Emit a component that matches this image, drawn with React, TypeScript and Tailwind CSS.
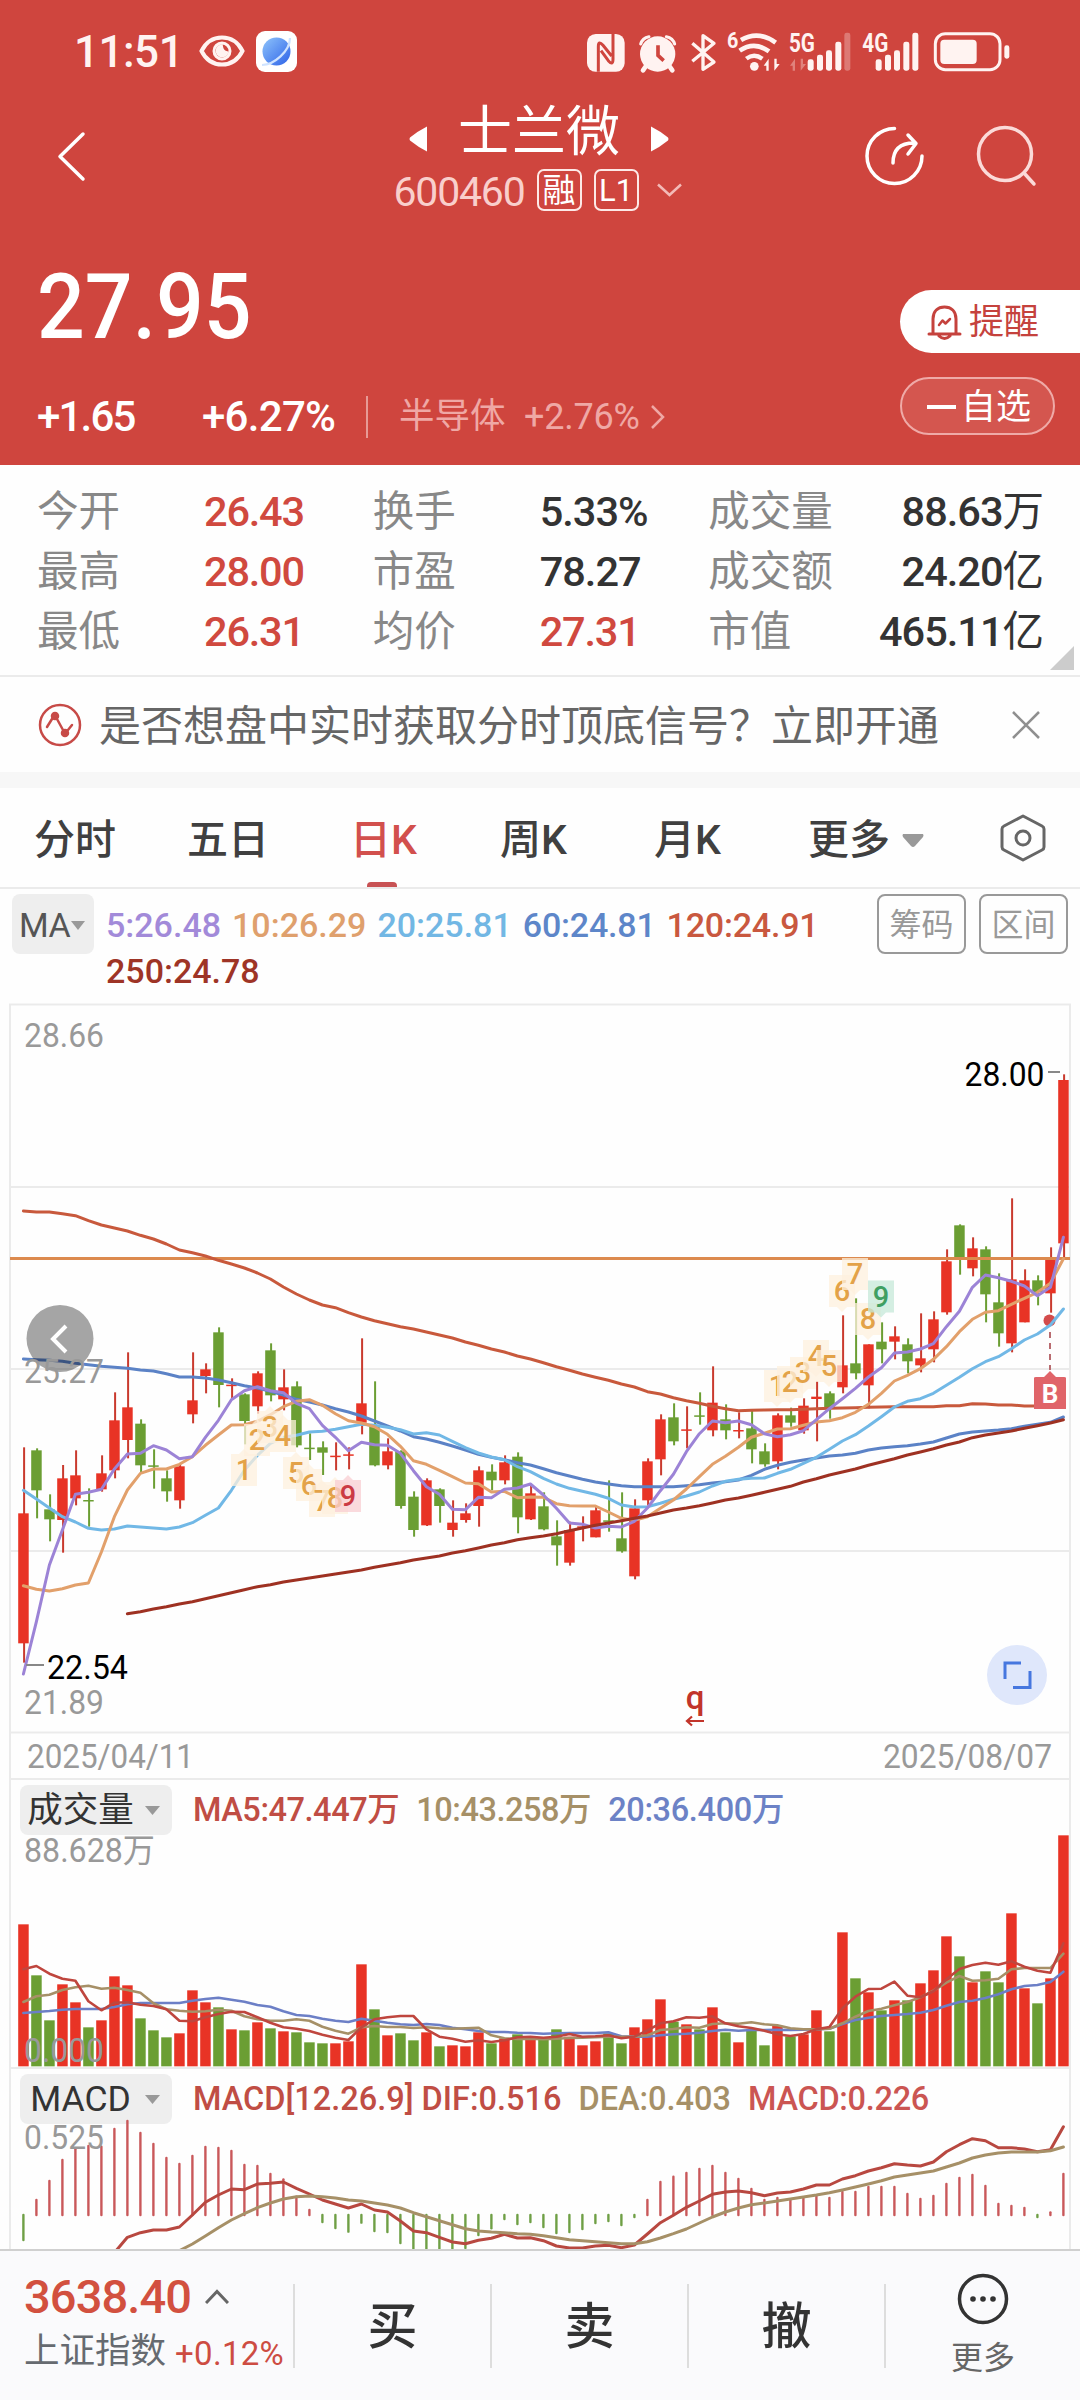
import type { ReactNode } from "react";

type Candle = [high: number, top: number, bottom: number, low: number];
type Line = { color: string; start?: number; points: number[] };

const RED = "#e83325";
const GREEN = "#6b9e33";

// 81 trading days, g = close below open
const DAYS = "rggrrgrrrgggrrrgrgrgrggg" + "rrrgrggrgrrrgrgrggrrrggr" + "rrgrgrgrggrgrrgrgrgrgrrr" + "grggrrgrr";

const CANDLES: Candle[] = [
  [442, 640, 1030, 1088], [445, 451, 571, 655], [583, 628, 658, 724], [495, 535, 660, 758], [451, 526, 595, 616],
  [565, 600, 603, 680], [466, 520, 568, 575], [277, 361, 511, 535], [157, 322, 420, 475], [358, 371, 496, 516],
  [448, 496, 499, 566], [511, 535, 574, 605], [490, 499, 601, 626], [157, 301, 343, 370], [190, 208, 228, 280],
  [82, 97, 255, 322], [235, 254, 257, 295], [280, 283, 363, 433], [214, 220, 319, 341], [130, 151, 286, 304],
  [208, 262, 298, 331], [244, 259, 436, 442], [400, 443, 447, 480], [424, 442, 458, 525], [427, 467, 471, 511],
  [442, 463, 467, 508], [115, 310, 368, 403], [244, 376, 496, 499], [415, 454, 496, 508], [451, 454, 618, 626],
  [574, 590, 690, 710], [535, 541, 676, 678], [565, 568, 618, 668], [601, 668, 690, 710], [610, 640, 660, 668],
  [499, 511, 618, 680], [493, 515, 541, 571], [466, 487, 541, 553], [457, 470, 652, 700], [556, 580, 658, 660],
  [577, 619, 688, 691], [661, 709, 736, 797], [665, 690, 788, 797], [649, 679, 683, 724], [620, 631, 712, 712],
  [541, 661, 665, 695], [577, 715, 754, 758], [598, 625, 829, 838], [475, 484, 601, 616], [343, 358, 478, 526],
  [310, 352, 424, 436], [319, 388, 391, 445], [277, 346, 349, 374], [199, 308, 391, 409], [313, 358, 391, 418],
  [337, 390, 394, 415], [332, 385, 448, 490], [430, 454, 493, 500], [340, 346, 484, 508], [323, 346, 368, 380],
  [295, 317, 391, 401], [244, 290, 297, 424], [274, 280, 322, 356], [46, 196, 262, 280], [-5, 190, 220, 238],
  [133, 133, 256, 325], [67, 125, 148, 190], [79, 109, 125, 178], [115, 133, 184, 220], [40, 175, 196, 217],
  [34, 58, 148, 187], [-152, -116, 37, 44], [-227, -224, -128, -76], [-188, -155, -95, -71], [-161, -152, -17, 67],
  [-80, 7, 100, 140], [-305, -62, 130, 157], [-92, -59, 67, 67], [-74, -59, -24, 16], [-158, -122, -20, 38],
  [-677, -660, -170, -128],
];

const PRICE_LINES: Line[] = [
  {
    color: "#c8593c",
    points: [
      -267, -264, -264, -259, -253, -238, -225, -216, -207, -194, -183, -168, -150, -142, -132, -119, -108, -96, -81, -63,
      -39, -18, 0, 15, 23, 38, 51, 62, 71, 80, 87, 96, 105, 114, 126, 136, 147, 156, 168, 177,
      188, 200, 211, 222, 232, 241, 252, 261, 275, 282, 293, 302, 310, 319, 326, 332, 331, 330, 329, 329,
      328, 326, 325, 324, 323, 322, 321, 320, 320, 320, 320, 317, 317, 311, 312, 315, 315, 318, 318, 318, 318,
    ],
  },
  {
    color: "#5b82c6",
    points: [
      177, 179, 181, 184, 190, 194, 199, 202, 205, 210, 213, 221, 231, 231, 234, 240, 248, 257, 264, 274,
      285, 298, 306, 315, 326, 336, 348, 363, 378, 393, 410, 417, 427, 438, 450, 463, 472, 479, 488, 495,
      506, 518, 528, 538, 546, 552, 557, 560, 560, 560, 560, 557, 554, 549, 545, 540, 526, 508, 496, 487,
      480, 474, 468, 465, 460, 450, 444, 440, 437, 432, 426, 414, 402, 396, 393, 390, 386, 379, 373, 367, 351,
    ],
  },
  {
    color: "#71b8e6",
    points: [
      571, 597, 624, 650, 666, 685, 690, 687, 678, 681, 684, 687, 681, 668, 646, 624, 571, 511, 466, 430,
      412, 406, 396, 394, 388, 380, 373, 376, 382, 389, 402, 398, 405, 424, 443, 459, 471, 479, 500, 515,
      535, 552, 565, 574, 583, 595, 615, 621, 620, 610, 598, 588, 576, 558, 544, 538, 535, 534, 520, 508,
      490, 472, 448, 423, 404, 378, 350, 321, 304, 296, 280, 256, 232, 206, 185, 170, 146, 120, 102, 75, 27,
    ],
  },
  {
    color: "#e2a06b",
    points: [
      857, 868, 873, 866, 855, 849, 756, 650, 570, 520, 507, 507, 493, 470, 436, 405, 375, 374, 364, 344,
      320, 304, 299, 316, 341, 362, 369, 380, 403, 439, 482, 493, 511, 530, 549, 551, 576, 574, 593, 591,
      592, 611, 617, 618, 618, 636, 655, 661, 650, 625, 600, 567, 530, 493, 469, 442, 412, 400, 387, 386,
      376, 366, 362, 353, 337, 313, 280, 243, 226, 206, 178, 140, 95, 58, 37, 32, 13, -5, -23, -50, -124,
    ],
  },
  {
    color: "#9c83d6",
    points: [
      1122, 965, 795, 690, 583, 577, 568, 507, 462, 460, 437, 450, 476, 470, 412, 361, 299, 272, 260, 272,
      278, 310, 326, 376, 412, 452, 427, 434, 436, 460, 512, 560, 583, 628, 629, 592, 593, 568, 564, 552,
      585, 625, 669, 673, 684, 679, 681, 664, 624, 572, 523, 455, 401, 363, 368, 363, 374, 401, 410, 404,
      392, 359, 326, 296, 265, 231, 203, 159, 156, 147, 131, 80, 34, -38, -75, -67, -56, -42, -13, -38, -188,
    ],
  },
  {
    color: "#9e3122",
    start: 8,
    points: [
      941, 935, 927, 920, 912, 905, 896, 887, 878, 869, 860, 854, 846, 840, 834, 828, 822, 816, 810, 802,
      795, 788, 780, 774, 768, 759, 752, 744, 735, 728, 719, 713, 708, 701, 692, 684, 676, 669, 662, 655,
      648, 639, 630, 624, 617, 609, 600, 594, 586, 577, 568, 559, 546, 536, 525, 516, 507, 496, 486, 476,
      465, 456, 446, 435, 426, 413, 405, 399, 393, 385, 377, 369, 359,
    ],
  },
];

const VOLUMES = [
  463, 616, 751, 643, 697, 772, 751, 619, 646, 745, 781, 802, 790, 661, 697, 712, 778, 781, 757, 775,
  784, 787, 817, 820, 820, 814, 583, 718, 796, 790, 811, 787, 829, 826, 829, 787, 820, 805, 793, 808,
  808, 778, 800, 826, 814, 790, 820, 772, 748, 688, 755, 763, 778, 712, 787, 817, 781, 826, 768, 799,
  793, 721, 784, 487, 625, 667, 721, 691, 691, 640, 601, 499, 559, 637, 604, 637, 430, 655, 700, 625, 196,
];

const VOLUME_LINES: Line[] = [
  {
    color: "#6c7fc6",
    points: [
      729, 726, 723, 719, 717, 717, 717, 711, 703, 699, 699, 699, 699, 692, 687, 683, 689, 695, 705, 710,
      724, 735, 738, 746, 752, 756, 746, 752, 758, 763, 765, 762, 765, 773, 778, 783, 786, 786, 788, 789,
      791, 790, 789, 789, 789, 787, 799, 800, 800, 796, 793, 791, 788, 783, 779, 782, 780, 780, 779, 780,
      779, 778, 776, 762, 750, 743, 738, 735, 732, 728, 720, 707, 696, 692, 684, 673, 658, 648, 645, 636, 605,
    ],
  },
  {
    color: "#a69067",
    points: [
      696, 679, 674, 660, 652, 647, 656, 653, 660, 668, 700, 718, 722, 725, 724, 719, 722, 739, 748, 752,
      752, 748, 752, 770, 782, 791, 772, 768, 771, 771, 774, 772, 775, 776, 775, 773, 796, 805, 807, 806,
      808, 806, 804, 803, 802, 800, 800, 800, 796, 780, 777, 772, 773, 762, 760, 761, 757, 763, 766, 775,
      778, 778, 776, 760, 740, 723, 716, 706, 696, 682, 662, 638, 618, 632, 631, 626, 598, 594, 594, 594, 551,
    ],
  },
  {
    color: "#bf463e",
    points: [
      598, 588, 611, 626, 632, 694, 721, 698, 697, 704, 708, 718, 752, 754, 742, 732, 725, 726, 742, 758,
      772, 776, 783, 794, 803, 810, 772, 748, 742, 738, 738, 778, 800, 806, 815, 811, 816, 811, 802, 800,
      803, 800, 792, 800, 799, 796, 805, 800, 781, 760, 754, 742, 743, 739, 760, 769, 774, 782, 793, 798,
      792, 778, 771, 715, 680, 657, 656, 635, 677, 682, 664, 628, 597, 585, 578, 584, 574, 590, 602, 608, 520,
    ],
  },
];

const MACD_BASE = 1335;
const MACD_BARS = [
  1410, 1290, 1233, 1170, 1138, 1128, 1130, 1077, 1053, 1089, 1122, 1164, 1182, 1158, 1131, 1134, 1143, 1185, 1188, 1212,
  1228, 1280, 1320, 1356, 1374, 1385, 1358, 1383, 1386, 1419, 1442, 1442, 1442, 1442, 1434, 1395, 1375, 1347, 1362, 1356,
  1371, 1389, 1386, 1377, 1359, 1353, 1365, 1341, 1290, 1236, 1220, 1209, 1197, 1188, 1209, 1227, 1257, 1290, 1284, 1290,
  1284, 1278, 1284, 1266, 1266, 1251, 1251, 1251, 1272, 1287, 1278, 1242, 1224, 1215, 1248, 1302, 1308, 1314, 1341, 1327, 1212,
];

const MACD_LINES: Line[] = [
  {
    color: "#b84840",
    start: 7,
    points: [
      1448, 1402, 1388, 1380, 1380, 1371, 1335, 1297, 1275, 1257, 1259, 1242, 1240, 1236,
      1255, 1272, 1290, 1302, 1314, 1302, 1320, 1326, 1353, 1383, 1388, 1402, 1416, 1421, 1411, 1405, 1393, 1404, 1403, 1412,
      1428, 1434, 1434, 1428, 1426, 1433, 1425, 1392, 1358, 1336, 1312, 1293, 1273, 1266, 1263, 1268, 1277, 1269, 1266, 1257,
      1245, 1245, 1227, 1217, 1203, 1193, 1181, 1185, 1188, 1176, 1145, 1124, 1106, 1112, 1133, 1133, 1137, 1145, 1139, 1070,
    ],
  },
  {
    color: "#a69067",
    start: 12,
    points: [
      1442, 1422, 1398, 1373, 1350, 1331, 1313, 1299, 1287, 1280, 1278, 1280, 1284, 1290, 1293, 1299, 1305, 1314, 1328,
      1340, 1352, 1364, 1376, 1383, 1386, 1388, 1391, 1393, 1397, 1403, 1409, 1412, 1415, 1418, 1421, 1421, 1415, 1404, 1391,
      1377, 1359, 1341, 1326, 1314, 1304, 1299, 1293, 1287, 1281, 1275, 1268, 1260, 1251, 1242, 1232, 1221, 1215, 1209, 1203,
      1191, 1179, 1164, 1155, 1149, 1146, 1146, 1146, 1142, 1131,
    ],
  },
];

const STATS = [
  [["今开", "26.43", 1], ["换手", "5.33%", 0], ["成交量", "88.63万", 0]],
  [["最高", "28.00", 1], ["市盈", "78.27", 0], ["成交额", "24.20亿", 0]],
  [["最低", "26.31", 1], ["均价", "27.31", 1], ["市值", "465.11亿", 0]],
] as const;

const px = (i: number) => 23.4 + i * 13;
const priceY = (v: number) => 1300 + v / 3;
const subY = (v: number) => 1770 + v / 3;
const dayColor = (i: number) => (DAYS[i] === "g" ? GREEN : RED);

function Lines({ lines, y, width = 3 }: { lines: Line[]; y: (v: number) => number; width?: number }) {
  return (
    <>
      {lines.map((line, n) => (
        <polyline
          key={n}
          fill="none"
          stroke={line.color}
          strokeWidth={width}
          strokeLinejoin="round"
          strokeLinecap="round"
          points={line.points.map((v, i) => `${px(i + (line.start ?? 0))},${y(v).toFixed(1)}`).join(" ")}
        />
      ))}
    </>
  );
}

type LabelProps = { x: number; y: number; w: number; fill: string; children: string };

function Label({ x, y, w, fill, children }: LabelProps) {
  return (
    <text x={x} y={y} fill={fill} fontSize="32.500" textLength={w} lengthAdjust="spacingAndGlyphs">
      {children}
    </text>
  );
}

function StatusBar() {
  return (
    <div className="flex h-[102px] items-center pl-[74px] text-[#fff3f1]">
      <span className="w-[125px] pt-px text-[44px] font-medium tracking-[-0.5px]">11:51</span>
      <svg width="46" height="32" viewBox="0 0 46 32" fill="none" stroke="currentColor" strokeWidth="4">
        <path d="M2.500 16C7 7 14 2.500 23 2.500S39 7 43.500 16C39 25 32 29.500 23 29.500S7 25 2.500 16Z" />
        <circle cx="23" cy="16" r="8" strokeWidth="3" />
        <path d="M22 11.500A4.500 4.500 0 1 0 27 18Q23 17 22 11.500Z" fill="currentColor" />
      </svg>
      <div className="ml-[11px] flex h-[41px] w-[41px] items-center justify-center rounded-[9px] bg-white">
        <svg width="35" height="35" viewBox="0 0 35 35">
          <defs>
            <linearGradient id="globe" x1="0" y1="0" x2="1" y2="1">
              <stop offset="0" stopColor="#8fc4fb" />
              <stop offset="1" stopColor="#2d62e8" />
            </linearGradient>
          </defs>
          <circle cx="17.500" cy="17.500" r="14" fill="url(#globe)" />
          <path d="M3 31C15 31 31 17 31 4" fill="none" stroke="#cfe3ff" strokeWidth="2.200" />
        </svg>
      </div>
      <svg className="ml-[290px] overflow-visible" width="430" height="42" viewBox="50 38 1290 126" fill="none">
        <rect x="50" y="50" width="113" height="113" rx="26" fill="currentColor" />
        <path d="M84 163V88Q84 68 98 84L124 116M128 50V126Q128 146 114 130L92 100" stroke="#cf453e" strokeWidth="9" />
        <circle cx="262" cy="110" r="53" fill="currentColor" />
        <path d="M211 80Q216 62 236 58M313 80Q308 62 288 58" stroke="currentColor" strokeWidth="9" strokeLinecap="round" />
        <path d="M227 146l-9 13M297 146l9 13" stroke="currentColor" strokeWidth="14" strokeLinecap="round" />
        <path d="M263 84v30l17 16" stroke="#cf453e" strokeWidth="11" />
        <path d="M366 78L431 134L398 156V55L431 78L366 132" stroke="currentColor" strokeWidth="10" strokeLinejoin="round" />
        <path d="M512 68Q564 38 616 76" stroke="currentColor" strokeWidth="14" />
        <path d="M508 100Q552 70 596 102" stroke="currentColor" strokeWidth="14" />
        <path d="M528 124Q551 106 576 124" stroke="currentColor" strokeWidth="13" />
        <circle cx="552" cy="147" r="13" fill="currentColor" />
        <path d="M580 145L595 124V160H588V145ZM628 140L612 160V124H619V140Z" fill="currentColor" />
        <path d="M659 145L674 124V160H667V145ZM707 140L691 160V124H698V140Z" fill="currentColor" opacity=".35" />
        <g fill="currentColor">
          <rect x="712" y="126" width="18" height="34" rx="7" />
          <rect x="740" y="112" width="18" height="48" rx="7" />
          <rect x="767" y="99" width="18" height="61" rx="7" />
          <rect x="795" y="73" width="18" height="87" rx="7" />
          <rect x="822" y="46" width="18" height="114" rx="7" opacity=".3" />
          <rect x="916" y="126" width="18" height="34" rx="7" />
          <rect x="944" y="112" width="18" height="48" rx="7" />
          <rect x="971" y="99" width="18" height="61" rx="7" />
          <rect x="999" y="73" width="18" height="87" rx="7" />
          <rect x="1026" y="46" width="18" height="114" rx="7" />
        </g>
        <g fill="currentColor" fontWeight="700">
          <text x="470" y="92" fontSize="66" textLength="34" lengthAdjust="spacingAndGlyphs">6</text>
          <text x="656" y="103" fontSize="76" textLength="78" lengthAdjust="spacingAndGlyphs">5G</text>
          <text x="876" y="103" fontSize="76" textLength="78" lengthAdjust="spacingAndGlyphs">4G</text>
        </g>
        <rect x="1095" y="49" width="194" height="108" rx="30" stroke="currentColor" strokeWidth="9" />
        <rect x="1110" y="67" width="109" height="73" rx="12" fill="currentColor" />
        <rect x="1302" y="84" width="15" height="40" rx="7" fill="currentColor" />
      </svg>
    </div>
  );
}

function TitleBar() {
  return (
    <div className="flex h-[128px] pl-[56px] pr-[42px] text-white">
      <svg className="mt-[28px]" width="32" height="52" viewBox="0 0 32 52" fill="none" stroke="currentColor" strokeWidth="3.500" strokeLinecap="round" strokeLinejoin="round">
        <path d="M27 4L4 26.500L27 49" />
      </svg>
      <div className="ml-[290px] flex w-[322px] flex-col items-center">
        <div className="flex h-[60px] items-center gap-[29px] pt-[2px]">
          <svg className="mt-[12px]" width="20" height="28" viewBox="0 0 20 28" fill="currentColor">
            <path d="M18 1.500V26.500Q9 22 1 15.500Q0 14 1 12.500Q9 6 18 1.500Z" />
          </svg>
          <h1 className="text-[54px] leading-[58px]">士兰微</h1>
          <svg className="mt-[12px]" width="20" height="28" viewBox="0 0 20 28" fill="currentColor">
            <path d="M2 1.500V26.500Q11 22 19 15.500Q20 14 19 12.500Q11 6 2 1.500Z" />
          </svg>
        </div>
        <div className="mt-[5px] flex items-center gap-[12px] pr-[3px]">
          <span className="pt-[4px] text-[41px] leading-[42px] tracking-[-1.200px] text-[#f9cfcc]">600460</span>
          <span className="flex h-[42px] w-[45px] items-center justify-center rounded-[7px] border-2 border-[#fde9e7] text-[33px]">融</span>
          <span className="flex h-[42px] w-[45px] items-center justify-center rounded-[7px] border-2 border-[#fde9e7] text-[31px]">L1</span>
          <svg className="ml-[6px]" width="25" height="14" viewBox="0 0 25 14" fill="none" stroke="#f3bab7" strokeWidth="2.500">
            <path d="M1 1.500L12.500 12L24 1.500" />
          </svg>
        </div>
      </div>
      <div className="ml-auto mt-[23px] flex gap-[51px]">
        <svg width="60" height="62" viewBox="0 0 60 62" fill="none" stroke="currentColor" strokeWidth="3.500" strokeLinecap="round" strokeLinejoin="round">
          <path d="M29.500 3.500A27.500 27.500 0 1 0 57 31" />
          <path d="M28 38Q28 18 49 18M43 10L51 18.500L43 29" />
        </svg>
        <svg width="62" height="62" viewBox="0 0 62 62" fill="none" stroke="#fbdad8" strokeWidth="3.500" strokeLinecap="round">
          <circle cx="29" cy="29" r="26.500" />
          <path d="M48 48L58 59" />
        </svg>
      </div>
    </div>
  );
}

function Quote() {
  return (
    <div className="flex h-[235px] justify-between pl-[37px] text-white">
      <div>
        <div className="mt-[28px] h-[100px] origin-left scale-x-[0.935] text-[90px] font-medium leading-[100px]">27.95</div>
        <div className="mt-[37px] flex h-[44px] items-center text-[42px] font-medium tracking-[-1px]">
          <span className="w-[165px] tracking-[-1.800px]">+1.65</span>
          <span className="w-[164px] tracking-[-0.700px]">+6.27%</span>
          <span className="h-[42px] w-[33px] border-l-2 border-[#e79a96]" />
          <span className="w-[125px] text-[35.500px] font-normal tracking-normal text-[#efa8a5]">半导体</span>
          <span className="w-[126px] text-[36px] font-normal tracking-[-0.200px] text-[#efa8a5]">+2.76%</span>
          <svg width="16" height="26" viewBox="0 0 16 26" fill="none" stroke="#efa8a5" strokeWidth="2.500">
            <path d="M2 2L13 13L2 24" />
          </svg>
        </div>
      </div>
      <div className="flex w-[180px] flex-col items-start pt-[60px]">
        <div className="flex h-[63px] w-full items-center rounded-l-full bg-white pl-[27px] pt-[2px] text-[35px] text-[#c5423d]">
          <svg className="mr-[7px]" width="35" height="36" viewBox="0 0 35 36" fill="none" stroke="currentColor" strokeWidth="3" strokeLinejoin="round" strokeLinecap="round">
            <path d="M6 28V14C6 6 11 2 17.500 2S29 6 29 14V28" />
            <path d="M2 29H33M12 31Q17.500 36 23 31" />
            <path d="M12 20L15.500 15.500L18.500 18.500L23 14" strokeWidth="2.500" />
          </svg>
          提醒
        </div>
        <div className="mt-[24px] flex h-[58px] w-[155px] items-center rounded-full border-2 border-[#efaaa7] bg-[#d4564f] pl-[25px] pt-[2px] text-[35px]">
          <span className="mr-[5px] h-[3.500px] w-[29px] bg-white" />
          自选
        </div>
      </div>
    </div>
  );
}

function Stats() {
  return (
    <div className="relative h-[212px] border-b-2 border-[#ebebeb] px-[37px] pt-[17px]">
      {STATS.map((row, n) => (
        <div key={n} className="flex h-[60px] items-center text-[41.500px]">
          {row.map(([name, value, up], i) => (
            <div key={name} className={i === 2 ? "flex w-[335px] justify-between" : "flex w-[336px]"}>
              <span className={i === 2 ? "text-[#888]" : "w-[167px] text-[#888]"}>{name}</span>
              <span className={up ? "font-medium tracking-[-1.200px] text-[#d0493f]" : "font-medium tracking-[-1px] text-[#333]"}>
                {value.replace(/[万亿]/, "")}
                <span className="font-normal">{value.match(/[万亿]/)?.[0]}</span>
              </span>
            </div>
          ))}
        </div>
      ))}
      <svg className="absolute bottom-[5px] right-[6px]" width="24" height="24" viewBox="0 0 24 24" fill="#ccc">
        <path d="M24 0V24H0Z" />
      </svg>
    </div>
  );
}

function Banner() {
  return (
    <div className="flex h-[111px] items-center border-b-[16px] border-[#f7f7f7] pl-[38px] pr-[39px]">
      <svg width="44" height="44" viewBox="0 0 44 44" fill="none" stroke="#c74a47" strokeWidth="2.500" strokeLinecap="round">
        <circle cx="22" cy="22" r="20" />
        <path d="M9 24L14 16M19 16L25 27M30 27L34 22" />
        <circle cx="17" cy="13" r="3" fill="#c74a47" />
        <circle cx="27" cy="30" r="3" fill="#c74a47" />
      </svg>
      <span className="ml-[17px] pt-[4px] text-[42px] text-[#666]">是否想盘中实时获取分时顶底信号？立即开通</span>
      <svg className="ml-auto" width="30" height="30" viewBox="0 0 30 30" fill="none" stroke="#8f8f8f" strokeWidth="2.500">
        <path d="M2 2L28 28M28 2L2 28" />
      </svg>
    </div>
  );
}

function Tab({ width, active, children }: { width: string; active?: boolean; children: ReactNode }) {
  return (
    <div className={`${width} ${active ? "text-[#d2504d]" : "text-[#404040]"} relative flex h-full shrink-0 items-center pt-[6px] text-[41px]`}>
      {children}
      {active && <span className="absolute bottom-0 left-[17px] h-[5px] w-[30px] rounded-t bg-[#c85254]" />}
    </div>
  );
}

function Tabs() {
  return (
    <div className="flex h-[101px] items-center border-b-2 border-[#ebebeb] pl-[34px] font-medium">
      <Tab width="w-[153px]">分时</Tab>
      <Tab width="w-[163px]">五日</Tab>
      <Tab width="w-[150px]" active>日K</Tab>
      <Tab width="w-[154px]">周K</Tab>
      <Tab width="w-[154px]">月K</Tab>
      <Tab width="w-[192px]">
        更多
        <svg className="ml-[12px]" width="22" height="14" viewBox="0 0 22 14" fill="#999">
          <path d="M1 0H21Q22 1 21 3L13 12Q11 14 9 12L1 3Q0 1 1 0Z" />
        </svg>
      </Tab>
      <svg width="46" height="48" viewBox="0 0 46 48" fill="none" stroke="#666" strokeWidth="3" strokeLinejoin="round">
        <path d="M23 2L42 12Q44 13 44 15V33Q44 35 42 36L23 46L4 36Q2 35 2 33V15Q2 13 4 12Z" />
        <circle cx="23" cy="24" r="7" />
      </svg>
    </div>
  );
}

function Averages() {
  return (
    <div className="flex h-[114px] items-start pl-[12px] pr-[12px] pt-[5px]">
      <div className="flex h-[60px] w-[82px] items-center rounded-lg bg-[#eee] pl-[7px] pt-[2px] text-[34px] text-[#555]">
        <span className="tracking-[-0.500px]">MA</span>
        <svg className="ml-[1px]" width="14" height="9" viewBox="0 0 14 9" fill="#999">
          <path d="M0 0H14L7 9Z" />
        </svg>
      </div>
      <div className="ml-[12px] flex w-[760px] flex-wrap gap-x-[11px] pt-[8px] text-[34px] font-medium leading-[46px]">
        <span className="text-[#a28ad9]">5:26.48</span>
        <span className="text-[#dfa06d]">10:26.29</span>
        <span className="text-[#72b7e4]">20:25.81</span>
        <span className="tracking-[-0.200px] text-[#5d86c9]">60:24.81</span>
        <span className="tracking-[-0.200px] text-[#c9583f]">120:24.91</span>
        <span className="text-[#9e3426]">250:24.78</span>
      </div>
      <div className="ml-auto flex gap-[13px] text-[32px] text-[#999]">
        <span className="flex h-[60px] w-[89px] items-center justify-center rounded-lg border-2 border-[#999] pt-[2px]">筹码</span>
        <span className="flex h-[60px] w-[89px] items-center justify-center rounded-lg border-2 border-[#999] pt-[2px]">区间</span>
      </div>
    </div>
  );
}

type MarkProps = { x: number; y: number; n: number; up?: boolean; tone?: "orange" | "red" | "green" };

// Nine-turn sequence flag, the pointer faces the candle it belongs to
function Mark({ x, y, n, up, tone = "orange" }: MarkProps) {
  const bg = { orange: "#fdf0dd", red: "#f8cdd2", green: "#c5e8d8" }[tone];
  const fg = { orange: "#e3a248", red: "#cb3a44", green: "#3f9f62" }[tone];
  return (
    <g>
      <path
        d={
          up
            ? `M${x - 13} ${y - 16}h8l5 -5l5 5h8v32h-26Z`
            : `M${x - 13} ${y - 16}h26v32h-8l-5 5l-5 -5h-8Z`
        }
        fill={bg}
        opacity=".75"
      />
      <text x={x} y={y + 10} textAnchor="middle" fontSize="29" fontWeight="500" fill={fg}>{n}</text>
    </g>
  );
}

function PriceChart() {
  return (
    <svg className="block" width="1080" height="777" viewBox="0 1003 1080 777">
      <g fill="none" stroke="#ebebeb" strokeWidth="2">
        <path d="M10 1780V1004.500H1070V1780M10 1187H1070M10 1369H1070M10 1551H1070M10 1732.500H1070M10 1779H1070" />
      </g>
      {CANDLES.map(([high, top, bottom, low], i) => (
        <g key={i} fill={dayColor(i)}>
          <rect x={px(i) - 0.3} y={priceY(high)} width="2" height={(low - high) / 3} fill={DAYS[i] === "g" ? GREEN : "#c93a2e"} />
          <rect x={px(i) - 5.2} y={priceY(top)} width="10.500" height={Math.max(1.5, (bottom - top) / 3)} />
        </g>
      ))}
      <path d="M10 1258.500H1070" stroke="#dc8a4e" strokeWidth="3" />
      <circle cx="1049.500" cy="1320.500" r="6" fill="#d34b4b" />
      <Lines lines={PRICE_LINES} y={priceY} />

      <Mark x={244} y={1470} n={1} up />
      <Mark x={257} y={1440} n={2} up />
      <Mark x={270} y={1427} n={3} up />
      <Mark x={283} y={1436} n={4} up />
      <Mark x={296} y={1473} n={5} up />
      <Mark x={309} y={1485} n={6} up />
      <Mark x={322} y={1501} n={7} up />
      <Mark x={335} y={1498} n={8} up />
      <Mark x={348} y={1496} n={9} up tone="red" />
      <Mark x={777} y={1386} n={1} />
      <Mark x={790} y={1382} n={2} />
      <Mark x={803} y={1373} n={3} />
      <Mark x={816} y={1356} n={4} />
      <Mark x={829} y={1366} n={5} />
      <Mark x={842} y={1291} n={6} />
      <Mark x={855} y={1274} n={7} />
      <Mark x={868} y={1319} n={8} />
      <Mark x={881} y={1296.5} n={9} tone="green" />

      <path d="M1050 1332V1370" stroke="#b96b70" strokeWidth="2" strokeDasharray="6 5" />
      <path d="M1034 1378Q1034 1377 1036 1377H1044L1050 1371L1056 1377H1064Q1066 1377 1066 1378V1409H1034Z" fill="#e06469" />
      <text x="1050" y="1402.500" textAnchor="middle" fontSize="26" fontWeight="700" fill="#fff">B</text>

      <circle cx="60" cy="1338.500" r="33.500" fill="#000" opacity=".35" />
      <path d="M66 1326L53 1339L66 1352" fill="none" stroke="#fff" strokeWidth="4" />

      <Label x={24} y={1047} w={80} fill="#999">28.66</Label>
      <Label x={24} y={1383} w={80} fill="#999">25.27</Label>
      <Label x={24} y={1714} w={80} fill="#999">21.89</Label>
      <Label x={964.5} y={1086} w={80} fill="#000">28.00</Label>
      <Label x={47} y={1679} w={81} fill="#000">22.54</Label>
      <path d="M26 1665H44M1048 1072H1060" stroke="#888" strokeWidth="2" />

      <circle cx="1017" cy="1675" r="30" fill="#dfe7fb" />
      <path d="M1021 1663H1005V1679M1030 1671V1687.500H1013" fill="none" stroke="#4677df" strokeWidth="3" />
      <text x="695" y="1709" textAnchor="middle" fontSize="33" fontWeight="500" fill="#c2352b">q</text>
      <path d="M704 1721H687M692 1716.500L687 1721L692 1725.500" fill="none" stroke="#c2352b" strokeWidth="2.200" />

      <Label x={27} y={1768} w={167} fill="#999">2025/04/11</Label>
      <Label x={883} y={1768} w={169} fill="#999">2025/08/07</Label>
    </svg>
  );
}

function Picker({ children }: { children: string }) {
  return (
    <div className="flex h-[50px] w-[152px] items-center justify-between rounded-lg bg-[#eee] pl-[7px] pr-[12px] text-[35.500px] font-normal tracking-normal text-[#333]">
      <span className="flex w-[107px] justify-center pt-[2px]">{children}</span>
      <svg width="15" height="9" viewBox="0 0 15 9" fill="#999">
        <path d="M0 0H15L7.500 9Z" />
      </svg>
    </div>
  );
}

function VolumeChart() {
  return (
    <div className="mx-[9px] h-[289px] border-x-2 border-b-2 border-[#ebebeb]">
      <div className="flex h-[55px] items-center pl-[9px] pt-[5px] text-[32.500px] font-medium tracking-[-0.450px]">
        <Picker>成交量</Picker>
        <span className="ml-[21px] text-[#c04d44]">MA5:47.447万</span>
        <span className="ml-[17px] text-[#a69067]">10:43.258万</span>
        <span className="ml-[17px] tracking-[-0.350px] text-[#6c82c6]">20:36.400万</span>
      </div>
      <svg className="-ml-[11px] block overflow-visible" width="1080" height="232" viewBox="0 1835 1080 232">
        {VOLUMES.map((v, i) => (
          <rect key={i} x={px(i) - 5.2} y={subY(v)} width="10.500" height={(889 - v) / 3} fill={dayColor(i)} />
        ))}
        <Lines lines={VOLUME_LINES} y={subY} width={2.6} />
        <Label x={24} y={1862} w={131} fill="#999">88.628万</Label>
        <Label x={24} y={2062} w={80} fill="#999">0.000</Label>
      </svg>
    </div>
  );
}

function MacdChart() {
  return (
    <div className="mx-[9px] h-[180px] overflow-hidden border-x-2 border-[#ebebeb]">
      <div className="flex h-[58px] items-center pl-[9px] pt-[2px] text-[32.500px] font-medium">
        <Picker>MACD</Picker>
        <span className="ml-[21px] text-[#c04d44]">MACD[12.26.9] DIF:0.516</span>
        <span className="ml-[17px] text-[#a69067]">DEA:0.403</span>
        <span className="ml-[17px] tracking-[-0.300px] text-[#cb5552]">MACD:0.226</span>
      </div>
      <svg className="-ml-[11px] block overflow-visible" width="1080" height="122" viewBox="0 2127 1080 122">
        <g strokeWidth="2.400" strokeLinecap="round">
          {MACD_BARS.map((v, i) => (
            <path key={i} d={`M${px(i)} ${subY(MACD_BASE)}V${subY(v)}`} stroke={v < MACD_BASE ? "#c9585a" : "#6f9f45"} />
          ))}
        </g>
        <Lines lines={MACD_LINES} y={subY} />
        <Label x={24} y={2149} w={80} fill="#999">0.525</Label>
      </svg>
    </div>
  );
}

function TradeBar() {
  return (
    <div className="flex h-[151px] border-t-2 border-[#d0d0d0] bg-[#fafafc]">
      <div className="w-[293px] pl-[24px] pt-[19px]">
        <div className="flex h-[52px] items-center">
          <span className="w-[181px] text-[47px] font-medium tracking-[-0.900px] text-[#d2503f]">3638.40</span>
          <svg width="24" height="15" viewBox="0 0 24 15" fill="none" stroke="#666" strokeWidth="3">
            <path d="M1 14L12 2.500L23 14" />
          </svg>
        </div>
        <div className="flex h-[54px] items-center whitespace-nowrap pt-[6px] text-[35.500px] text-[#666a70]">
          上证指数
          <span className="ml-[9px] mt-[3px] text-[33px] tracking-[0.300px] text-[#cd4c42]">+0.12%</span>
        </div>
      </div>
      {["买", "卖", "撤"].map((name) => (
        <div key={name} className="flex w-[197px] items-center">
          <span className="h-[84px] w-[2px] bg-[#ddd]" />
          <span className="flex-1 pt-[2px] text-center text-[50px] font-medium text-[#333]">{name}</span>
        </div>
      ))}
      <div className="flex flex-1 items-center">
        <span className="h-[84px] w-[2px] bg-[#ddd]" />
        <div className="flex flex-1 flex-col items-center text-[32px] leading-[48px] text-[#666]">
          <svg className="mt-[4px]" width="52" height="52" viewBox="0 0 52 52" fill="none" stroke="#333" strokeWidth="3.500">
            <circle cx="26" cy="26" r="23.500" />
            <g fill="#333" stroke="none">
              <circle cx="16" cy="26" r="2.800" />
              <circle cx="26" cy="26" r="2.800" />
              <circle cx="36" cy="26" r="2.800" />
            </g>
          </svg>
          <span className="mt-[9px]">更多</span>
        </div>
      </div>
    </div>
  );
}

export default function App() {
  return (
    <div className="h-[2400px] w-[1080px] overflow-hidden bg-[#fefefe] font-['Roboto','Noto_Sans_CJK_SC',sans-serif] leading-none">
      <header className="h-[465px] bg-[#cf453e]">
        <StatusBar />
        <TitleBar />
        <Quote />
      </header>
      <Stats />
      <Banner />
      <Tabs />
      <Averages />
      <PriceChart />
      <VolumeChart />
      <MacdChart />
      <TradeBar />
    </div>
  );
}
